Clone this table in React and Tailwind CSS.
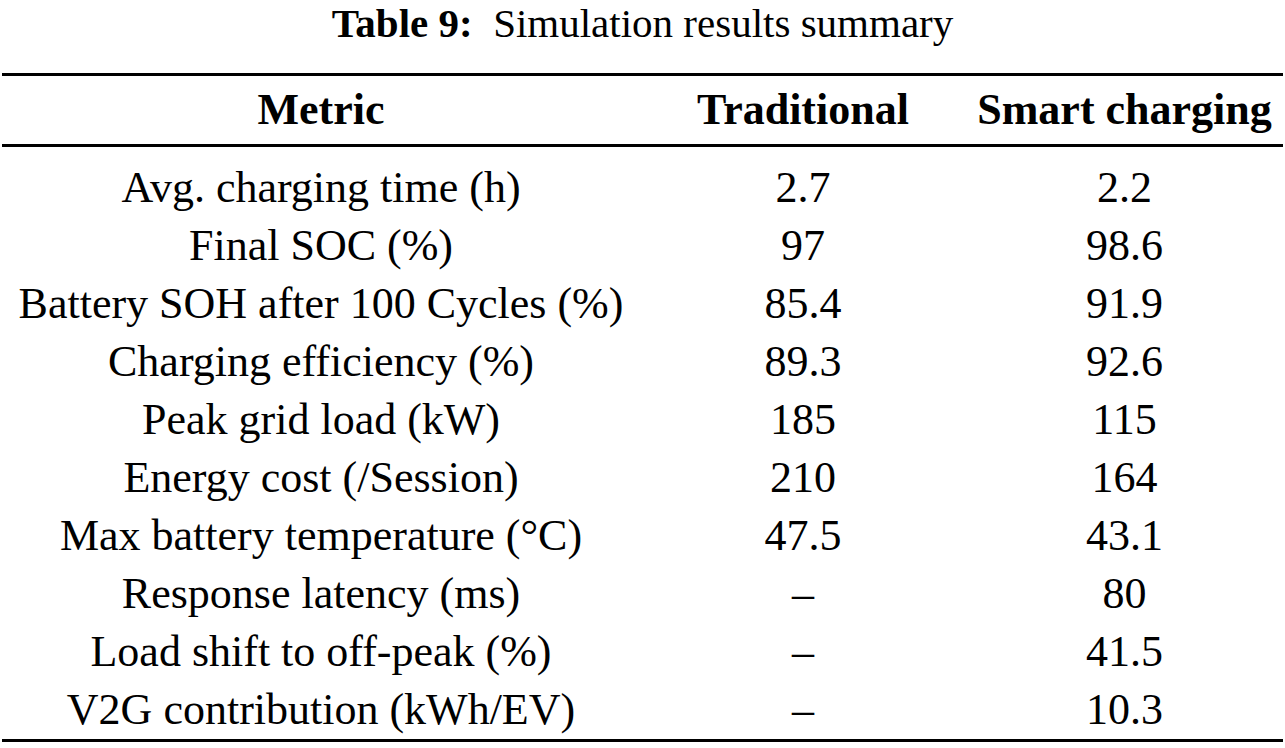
import React from "react";

const rows = [
    ["Avg. charging time (h)", "2.7", "2.2"],
    ["Final SOC (%)", "97", "98.6"],
    ["Battery SOH after 100 Cycles (%)", "85.4", "91.9"],
    ["Charging efficiency (%)", "89.3", "92.6"],
    ["Peak grid load (kW)", "185", "115"],
    ["Energy cost (/Session)", "210", "164"],
    ["Max battery temperature (°C)", "47.5", "43.1"],
    ["Response latency (ms)", "–", "80"],
    ["Load shift to off-peak (%)", "–", "41.5"],
    ["V2G contribution (kWh/EV)", "–", "10.3"],
];

export default function App() {
    return (
        <div className="w-[1285px] h-[748px] bg-white text-black font-['Liberation_Serif',serif] text-[44px] overflow-hidden">
            <div className="h-[46px] leading-[46px] text-[41px] text-center">
                <span className="font-bold">Table 9:</span>&nbsp; Simulation results summary
            </div>

            <div className="mt-[27px] mx-[2px] border-t-[3px] border-b-[3px] border-black">
                {/* cabeçalho */}
                <div className="grid grid-cols-[638px_326px_1fr] h-[71px] items-center font-bold text-center border-b-[3px] border-black">
                    <div>Metric</div>
                    <div>Traditional</div>
                    <div>Smart charging</div>
                </div>

                <div className="pt-[12px]">
                    {rows.map((r) => (
                        <div key={r[0]} className="grid grid-cols-[638px_326px_1fr] h-[58px] leading-[58px] text-center whitespace-nowrap">
                            <div>{r[0]}</div>
                            <div>{r[1]}</div>
                            <div>{r[2]}</div>
                        </div>
                    ))}
                </div>
            </div>
        </div>
    );
}
